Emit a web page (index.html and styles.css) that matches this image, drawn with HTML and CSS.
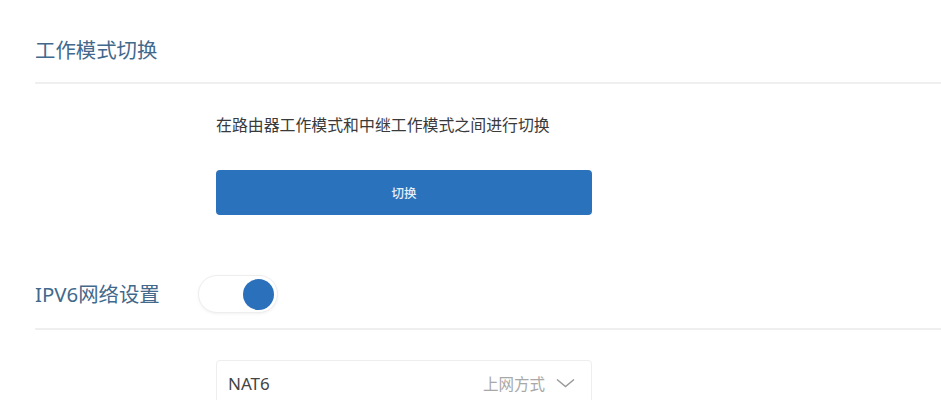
FILE: index.html
```html
<!DOCTYPE html>
<html lang="zh-CN">
<head>
    <meta charset="UTF-8">
    <meta name="viewport" content="width=device-width, initial-scale=1.0">
    <title>路由设置</title>
    <link rel="stylesheet" href="styles.css">
</head>
<body>
    <main class="page">
        <section class="block">
            <header class="block-head">
                <h2 class="block-title">工作模式切换</h2>
            </header>
            <div class="block-body">
                <p class="desc">在路由器工作模式和中继工作模式之间进行切换</p>
                <button type="button" class="btn-primary">切换</button>
            </div>
        </section>

        <section class="block">
            <header class="block-head row">
                <h2 class="block-title">IPV6网络设置</h2>
                <div class="toggle on" role="switch" aria-checked="true">
                    <span class="knob"></span>
                </div>
            </header>
            <div class="block-body body-select">
                <div class="select">
                    <span class="select-value">NAT6</span>
                    <span class="select-label">上网方式</span>
                    <svg class="chevron" width="19" height="10" viewBox="0 0 19 10">
                        <path d="M1 1.5 L9.5 8.5 L18 1.5" fill="none" stroke="#9a9a9a" stroke-width="1.5"/>
                    </svg>
                </div>
            </div>
        </section>
    </main>
</body>
</html>
```

FILE: styles.css
```css
body {
    margin: 0;
    padding: 0;
    background-color: #fff;
    font-family: "Noto Sans", "Noto Sans CJK SC", sans-serif;
    color: #333;
}

.page {
    padding-left: 35px;
}

.block-head {
    padding: 36px 0 18px;
    border-bottom: 2px solid #efefef;
}

.block-head.row {
    display: flex;
    align-items: center;
    gap: 38px;
    padding: 60px 0 15px;
}

.block-title {
    margin: 0;
    font-size: 20.4px;
    font-weight: 400;
    line-height: 28px;
    color: #42698c;
}

.block-body {
    padding: 30px 0 0 181px;
}

.desc {
    margin: 0 0 34px;
    font-size: 15.9px;
    line-height: 22px;
    color: #3a3a3a;
}

.btn-primary {
    display: block;
    width: 376px;
    height: 45px;
    border: none;
    border-radius: 4px;
    background-color: #2b72bd;
    color: #e4eef8;
    font-family: inherit;
    font-size: 12.5px;
    font-weight: 500;
    cursor: pointer;
}

.toggle {
    display: flex;
    align-items: center;
    justify-content: flex-end;
    box-sizing: border-box;
    width: 80px;
    height: 38px;
    padding: 0 3px;
    border: 1px solid #eee;
    border-radius: 19px;
    background-color: #fff;
    box-shadow: 0 1px 3px rgba(0, 0, 0, 0.06);
}

.knob {
    width: 31px;
    height: 31px;
    border-radius: 50%;
    background-color: #2a70bb;
}

.select {
    display: flex;
    align-items: center;
    box-sizing: border-box;
    width: 376px;
    height: 46px;
    padding: 0 16px 0 11px;
    border: 1px solid #eee;
    border-radius: 4px;
}

.select-value {
    flex: 1;
    font-size: 17px;
    color: #444;
}

.select-label {
    margin-right: 11px;
    font-size: 15.5px;
    color: #a8a8a8;
}
```
